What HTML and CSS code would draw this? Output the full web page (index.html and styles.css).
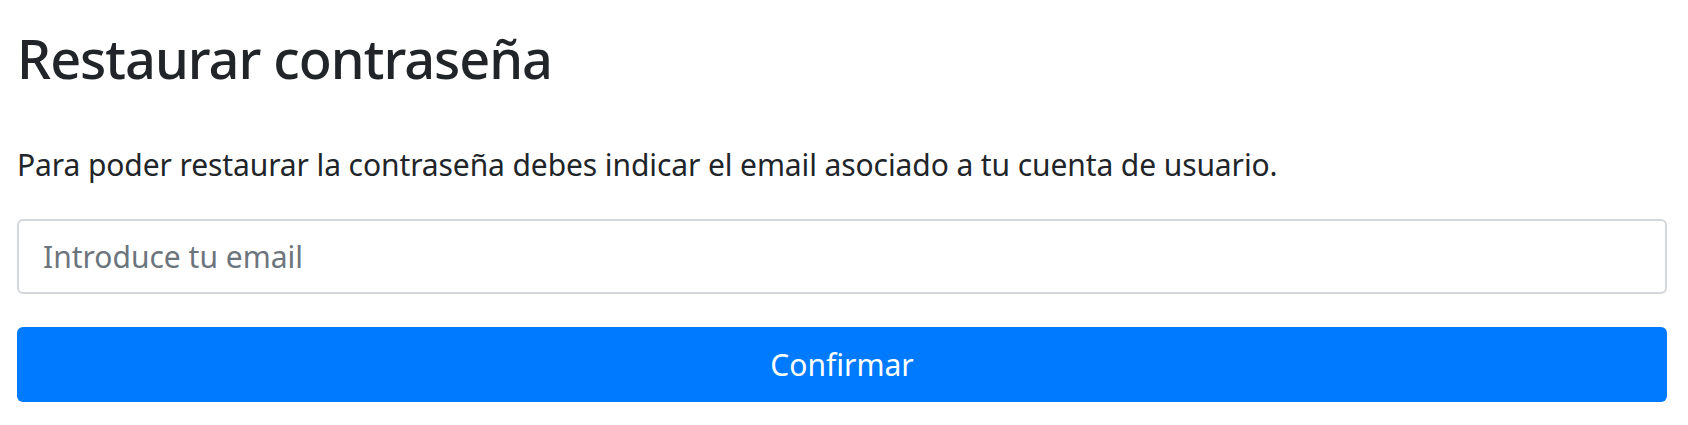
FILE: index.html
```html
<!DOCTYPE html>
<html lang="es">
<head>
<meta charset="utf-8">
<title>Restaurar contraseña</title>
<link rel="stylesheet" href="styles.css">
</head>
<body>
<main class="page">
  <h1 class="title">Restaurar contraseña</h1>
  <p class="lead">Para poder restaurar la contraseña debes indicar el email asociado a tu cuenta de usuario.</p>
  <form class="form">
    <input class="field" type="email" placeholder="Introduce tu email">
    <button class="btn" type="button">Confirmar</button>
  </form>
</main>
</body>
</html>
```
FILE: styles.css
```css
html, body {
  margin: 0;
  padding: 0;
  background: #fff;
}
.page {
  padding: 0 21px 0 17px;
  font-family: "Noto Sans", "Open Sans", sans-serif;
  color: #212529;
}
.title {
  margin: 22px 0 0;
  font-size: 54px;
  font-weight: 500;
  line-height: 72px;
  letter-spacing: -1px;
}
.lead {
  margin: 48px 0 0;
  font-size: 30px;
  line-height: 45px;
  letter-spacing: -0.1px;
}
.form {
  display: flex;
  flex-direction: column;
  gap: 33px;
  margin-top: 32px;
}
.field {
  box-sizing: border-box;
  height: 75px;
  padding: 0 24px;
  border: 2px solid #d3d7dc;
  border-radius: 6px;
  font-family: inherit;
  font-size: 30px;
  color: #495057;
  outline: none;
}
.field::placeholder {
  color: #6c757d;
}
.btn {
  height: 75px;
  border: 0;
  border-radius: 6px;
  background: #007bff;
  color: #fff;
  font-family: inherit;
  font-size: 30px;
  cursor: pointer;
}
```
